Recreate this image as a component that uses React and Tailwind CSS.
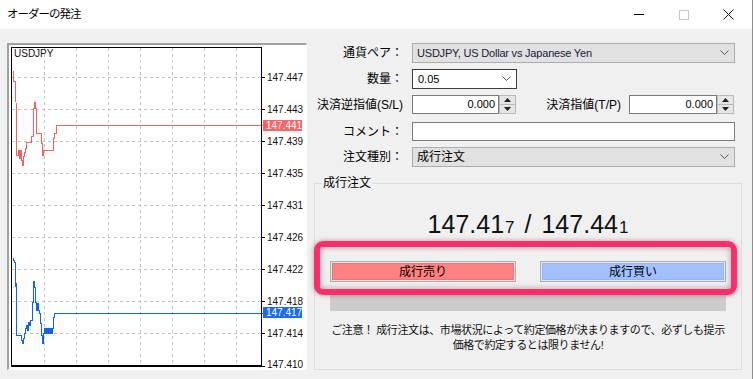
import React from "react";

const font = { fontFamily: '"Liberation Sans", "Noto Sans CJK JP", sans-serif' };

const redLine =
  "12,71 13,71 13,81 15,81 16,122 16,155 18,155 18,150 19,150 19,158 20,158 20,150 21,150 21,160 22,160 22,165 23,165 23,156 24,156 24,152 25,152 25,148 26,148 26,142 31,142 31,136 33,136 33,108 34,108 34,102 35,102 35,108 36,108 36,133 41,133 41,143 42,143 42,155 43,155 43,150 53,150 53,138 54,138 54,133 56,133 56,125 262,125";

const blueLine =
  "12,258 13,258 14,262 15,262 16,305 16,335 21,335 21,340 22,340 22,343 23,343 23,338 24,338 24,333 25,333 25,328 26,328 26,325 27,325 27,330 28,330 28,322 29,322 29,325 30,325 30,320 32,320 32,302 33,302 33,281 34,281 34,287 35,287 35,302 36,302 36,310 37,310 37,303 38,303 38,310 39,310 39,313 40,313 40,323 41,323 41,335 42,335 42,343 43,343 43,333 44,333 44,328 45,328 45,333 46,333 46,328 47,328 47,333 48,333 48,328 49,328 49,333 50,333 50,328 51,328 51,333 52,333 52,328 53,328 53,317 54,317 54,313 262,313";

const gridX = [44, 76, 108, 140, 172, 204, 236];
const gridY = [77, 109, 141, 173, 205, 237, 269, 301, 333];
const labels = [
  [77, "147.447"],
  [109, "147.443"],
  [141, "147.439"],
  [173, "147.435"],
  [205, "147.431"],
  [237, "147.426"],
  [269, "147.422"],
  [301, "147.418"],
  [333, "147.414"],
  [364, "147.410"],
];

function Chart() {
  return (
    <svg width="297" height="324" viewBox="9 45 297 324" shapeRendering="crispEdges">
      {gridX.map((x) => (
        <line key={"x" + x} x1={x + 0.5} y1="48" x2={x + 0.5} y2="365" stroke="#c4c4c4" strokeDasharray="3 3" />
      ))}
      {gridY.map((y) => (
        <line key={"y" + y} x1="12" y1={y + 0.5} x2="261" y2={y + 0.5} stroke="#c4c4c4" strokeDasharray="3 3" />
      ))}
      <polyline points={redLine} fill="none" stroke="#ff5c5c" strokeWidth="1" transform="translate(0.5 0.5)" />
      <polyline points={blueLine} fill="none" stroke="#0a62ff" strokeWidth="1.1" transform="translate(0.5 0.5)" />
      <rect x="11.5" y="47.5" width="250" height="318" fill="none" stroke="#000" />
      <line x1="11" y1="366.5" x2="262" y2="366.5" stroke="#000" />
      {labels.map(([y, t], i) => (
        <g key={t}>
          <line x1="262" y1={(i === 9 ? 366 : y) + 0.5} x2="265" y2={(i === 9 ? 366 : y) + 0.5} stroke="#000" />
          <text x="267" y={y + 3.5} fontSize="10" fill="#111" style={font} shapeRendering="auto">
            {t}
          </text>
        </g>
      ))}
      <rect x="263" y="120" width="39" height="11" fill="#ff6262" />
      <text x="266" y="129" fontSize="10" fill="#fff" style={font}>
        147.441
      </text>
      <rect x="263" y="307" width="39" height="11" fill="#1769ff" />
      <text x="266" y="316" fontSize="10" fill="#fff" style={font}>
        147.417
      </text>
      <text x="14" y="57" fontSize="10" fill="#111" style={font}>
        USDJPY
      </text>
    </svg>
  );
}

const Chevron = () => (
  <svg width="9" height="6" viewBox="0 0 9 6" className="ml-auto mr-[5px] shrink-0">
    <polyline points="0.5,0.5 4.5,4.5 8.5,0.5" fill="none" stroke="#555" strokeWidth="1" />
  </svg>
);

const Spinner = () => (
  <div className="flex h-full w-[17px] flex-col">
    <div className="flex flex-1 items-center justify-center border border-[#b9b9b9] bg-[#e6e6e6]">
      <svg width="7" height="4" viewBox="0 0 7 4">
        <polygon points="3.5,0 7,4 0,4" fill="#222" />
      </svg>
    </div>
    <div className="flex flex-1 items-center justify-center border border-t-0 border-[#b9b9b9] bg-[#e6e6e6]">
      <svg width="7" height="4" viewBox="0 0 7 4">
        <polygon points="0,0 7,0 3.5,4" fill="#222" />
      </svg>
    </div>
  </div>
);

const Label = ({ children, w = "w-[96px]" }) => (
  <div className={`${w} shrink-0 text-right text-[12px] leading-[16px] text-black`}>{children}</div>
);

export default function App() {
  return (
    <div
      className="flex h-[379px] w-[753px] flex-col overflow-hidden border-r border-[#8c8c8c] bg-[#f0f0f0] text-black"
      style={font}
    >
      {/* title bar */}
      <div className="flex h-[29px] shrink-0 items-center bg-white pl-[7px]">
        <span className="text-[11.5px] tracking-[-1px] text-black">オーダーの発注</span>
        <div className="ml-auto flex pr-[1px]">
          <div className="flex h-[29px] w-[45px] items-center justify-center">
            <div className="h-px w-[10px] bg-black" />
          </div>
          <div className="flex h-[29px] w-[45px] items-center justify-center">
            <div className="h-[10px] w-[10px] border border-[#c6c6c6]" />
          </div>
          <div className="flex h-[29px] w-[45px] items-center justify-center">
            <svg width="11" height="11" viewBox="0 0 11 11">
              <path d="M0.5 0.5 L10.5 10.5 M10.5 0.5 L0.5 10.5" stroke="#111" strokeWidth="1" />
            </svg>
          </div>
        </div>
      </div>

      <div className="flex flex-1">
        {/* chart */}
        <div className="ml-[7px] mt-[14px] h-[327px] w-[300px] shrink-0 border-b border-l-2 border-r border-t-2 border-b-white border-l-[#a0a0a0] border-r-white border-t-[#a0a0a0] bg-white">
          <Chart />
        </div>

        {/* form */}
        <div className="mt-[14px] flex flex-1 flex-col">
          <div className="flex h-[20px] items-center">
            <Label>通貨ペア：</Label>
            <div className="ml-[9px] flex h-full w-[323px] items-center border border-[#adadad] bg-[#e1e1e1] pl-[4px] text-[11px] tracking-[-0.2px] text-[#1a1a3a]">
              USDJPY, US Dollar vs Japanese Yen
              <Chevron />
            </div>
          </div>

          <div className="mt-[6px] flex h-[20px] items-center">
            <Label>数量：</Label>
            <div className="ml-[9px] flex h-full w-[105px] items-center border border-[#3c3c3c] bg-white pl-[5px] text-[11px]">
              0.05
              <Chevron />
            </div>
          </div>

          <div className="mt-[6px] flex h-[19px] items-center">
            <Label>決済逆指値(S/L)</Label>
            <div className="ml-[9px] flex h-full w-[87px] items-center justify-end border border-[#7a7a7a] bg-white pr-[3px] text-[11px]">
              0.000
            </div>
            <Spinner />
            <Label w="w-[105px]">決済指値(T/P)</Label>
            <div className="ml-[8px] flex h-full w-[88px] items-center justify-end border border-[#7a7a7a] bg-white pr-[3px] text-[11px]">
              0.000
            </div>
            <Spinner />
          </div>

          <div className="mt-[8px] flex h-[19px] items-center">
            <Label>コメント：</Label>
            <div className="ml-[9px] h-full w-[323px] border border-[#7a7a7a] bg-white" />
          </div>

          <div className="mt-[6px] flex h-[20px] items-center">
            <Label>注文種別：</Label>
            <div className="ml-[9px] flex h-full w-[323px] items-center border border-[#adadad] bg-[#e1e1e1] pl-[4px] text-[12px]">
              成行注文
              <Chevron />
            </div>
          </div>

          <fieldset className="ml-[7px] mt-[8px] flex h-[195px] w-[428px] flex-col border border-[#dcdcdc]">
            <legend className="ml-[7px] px-px text-[12px] leading-[16px]">成行注文</legend>

            <div className="mt-[21px] flex items-baseline justify-center text-[25px] leading-[25px] text-[#111]">
              <span>147.41</span>
              <span className="ml-px text-[17px]">7</span>
              <span className="mx-[10px]">/</span>
              <span>147.44</span>
              <span className="ml-px text-[17px]">1</span>
            </div>

            <div className="relative ml-[15px] mt-[21px] flex h-[21px] w-[396px] gap-[24px]">
              <div className="flex flex-1 border border-[#adadad] bg-[#e8e8e8] p-px">
                <div className="flex flex-1 items-center justify-center border border-[#f07272] bg-[#ff8181] text-[12px]">
                  成行売り
                </div>
              </div>
              <div className="flex flex-1 border border-[#adadad] bg-[#e8e8e8] p-px">
                <div className="flex flex-1 items-center justify-center border border-[#94b4f8] bg-[#a2c0ff] text-[12px]">
                  成行買い
                </div>
              </div>
              <div className="pointer-events-none absolute bottom-[-13px] left-[-16px] right-[-11px] top-[-20px] rounded-[9px] border-[6px] border-[#ff2b6b] shadow-[0_0_5px_rgba(0,0,0,0.35),inset_0_0_6px_rgba(0,0,0,0.35)]" />
            </div>

            <div className="ml-[15px] mt-[11px] h-[18px] w-[396px] bg-[#cccccc]" />

            <p className="ml-[6px] mt-[12px] w-[414px] whitespace-nowrap text-center text-[11px] leading-[15px] tracking-[-0.4px] text-[#111]">
              ご注意！ 成行注文は、市場状況によって約定価格が決まりますので、必ずしも提示
              <br />
              価格で約定するとは限りません!
            </p>
          </fieldset>
        </div>
      </div>
    </div>
  );
}
